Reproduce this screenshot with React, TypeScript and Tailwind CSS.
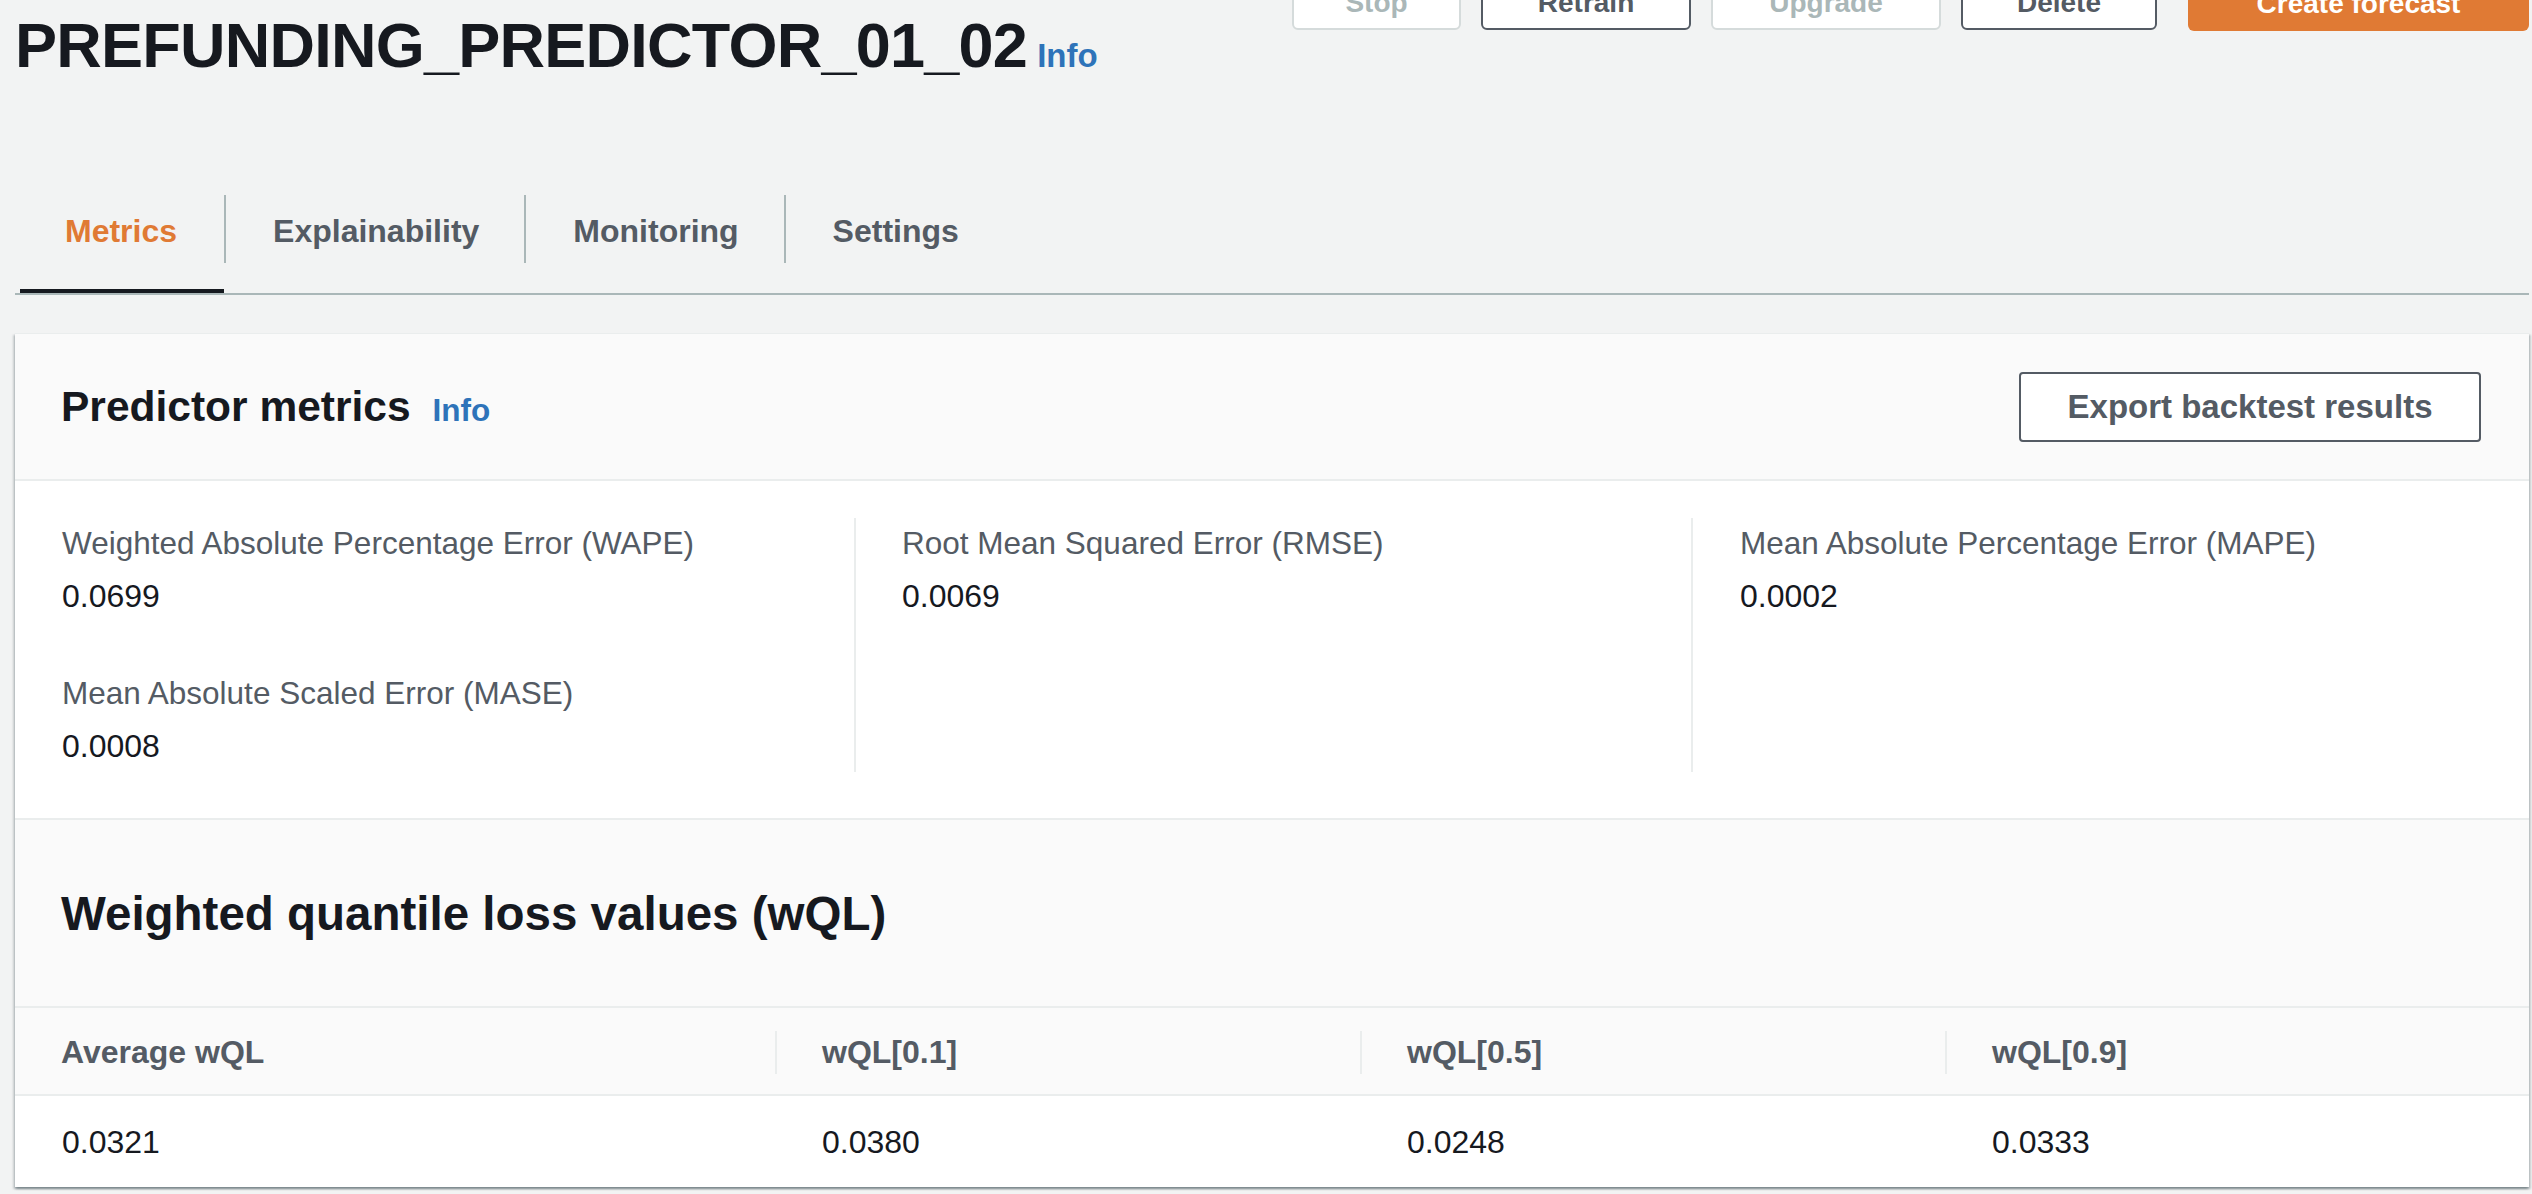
type Metric = {
  label: string;
  value: string;
};

type Tab = {
  name: string;
  active?: boolean;
};

const tabs: Tab[] = [
  { name: "Metrics", active: true },
  { name: "Explainability" },
  { name: "Monitoring" },
  { name: "Settings" },
];

const metricColumns: Metric[][] = [
  [
    { label: "Weighted Absolute Percentage Error (WAPE)", value: "0.0699" },
    { label: "Mean Absolute Scaled Error (MASE)", value: "0.0008" },
  ],
  [{ label: "Root Mean Squared Error (RMSE)", value: "0.0069" }],
  [{ label: "Mean Absolute Percentage Error (MAPE)", value: "0.0002" }],
];

const wqlColumns = [
  { head: "Average wQL", value: "0.0321" },
  { head: "wQL[0.1]", value: "0.0380" },
  { head: "wQL[0.5]", value: "0.0248" },
  { head: "wQL[0.9]", value: "0.0333" },
];

function HeaderActions() {
  return (
    <div className="mt-[-34px] flex items-start gap-[20px]">
      <button
        type="button"
        className="h-[64px] w-[169px] rounded-[6px] border-2 border-[#d5dbdb] bg-white pt-[10px] text-[28px] font-bold text-[#aab7b8]"
      >
        Stop
      </button>
      <button
        type="button"
        className="h-[64px] w-[210px] rounded-[6px] border-2 border-[#545b64] bg-white pt-[10px] text-[28px] font-bold text-[#545b64]"
      >
        Retrain
      </button>
      <button
        type="button"
        className="h-[64px] w-[230px] rounded-[6px] border-2 border-[#d5dbdb] bg-white pt-[10px] text-[28px] font-bold text-[#aab7b8]"
      >
        Upgrade
      </button>
      <button
        type="button"
        className="h-[64px] w-[196px] rounded-[6px] border-2 border-[#545b64] bg-white pt-[10px] text-[28px] font-bold text-[#545b64]"
      >
        Delete
      </button>
      <button
        type="button"
        className="ml-[11px] h-[65px] w-[341px] rounded-[6px] bg-[#e07a34] pt-[10px] text-[28px] font-bold text-white"
      >
        Create forecast
      </button>
    </div>
  );
}

function Tabs() {
  return (
    <div className="mt-[98px] border-b-2 border-[#aab7b8]">
      <div className="ml-[5px] flex">
        {tabs.map((tab, i) => (
          <div key={tab.name} className="flex flex-col pt-[14px]">
            <div
              className={
                i === 0
                  ? "flex h-[68px] items-center pl-[45px] pr-[47px] pt-[3px]"
                  : "flex h-[68px] items-center border-l-2 border-[#aab7b8] pl-[47px] pr-[45px] pt-[3px]"
              }
            >
              <span
                className={
                  tab.active
                    ? "text-[32px] font-bold leading-[36px] text-[#e07a34]"
                    : "text-[32px] font-bold leading-[36px] text-[#545b64]"
                }
              >
                {tab.name}
              </span>
            </div>
            <div className="h-[26px]" />
            <div className={tab.active ? "h-[4px] bg-[#16191f]" : "h-[4px]"} />
          </div>
        ))}
      </div>
    </div>
  );
}

function MetricItem({ metric, first }: { metric: Metric; first: boolean }) {
  return (
    <div className={first ? "" : "mt-[53px]"}>
      <p className="text-[31.5px] leading-[44px] text-[#545b64]">{metric.label}</p>
      <p className="mt-[9px] text-[32px] leading-[44px] text-[#16191f]">{metric.value}</p>
    </div>
  );
}

function PredictorCard() {
  return (
    <section className="mt-[38px] border-t border-[#eaeded] bg-white shadow-[0_2px_2px_0_rgba(0,28,36,0.3),2px_2px_2px_0_rgba(0,28,36,0.15),-2px_2px_2px_0_rgba(0,28,36,0.15)]">
      <div className="flex h-[147px] items-center justify-between border-b-2 border-[#eaeded] bg-[#fafafa] pl-[46px] pr-[48px]">
        <div className="flex items-baseline gap-[22px]">
          <h2 className="text-[42.5px] font-bold text-[#16191f]">Predictor metrics</h2>
          <a className="text-[31.5px] font-bold text-[#2e73b9]">Info</a>
        </div>
        <button
          type="button"
          className="h-[70px] w-[462px] rounded-[4px] border-2 border-[#545b64] bg-white text-[33px] font-bold text-[#545b64]"
        >
          Export backtest results
        </button>
      </div>

      <div className="grid grid-cols-[839px_837px_1fr] border-b-2 border-[#eaeded] pb-[46px] pt-[37px]">
        {metricColumns.map((col, i) => (
          <div
            key={i}
            className={
              i === 0
                ? "pb-[4px] pl-[47px] pt-[3px]"
                : i === 1
                  ? "border-l-2 border-[#eaeded] pb-[4px] pl-[46px] pt-[3px]"
                  : "border-l-2 border-[#eaeded] pb-[4px] pl-[47px] pt-[3px]"
            }
          >
            {col.map((m, j) => (
              <MetricItem key={m.label} metric={m} first={j === 0} />
            ))}
          </div>
        ))}
      </div>

      <div className="flex h-[188px] items-center border-b-2 border-[#eaeded] bg-[#fafafa] pl-[46px] pt-[2px]">
        <h2 className="text-[47.5px] font-bold text-[#16191f]">Weighted quantile loss values (wQL)</h2>
      </div>

      <div className="grid h-[88px] grid-cols-[760px_585px_585px_1fr] border-b-2 border-[#eaeded] bg-[#fafafa] pt-[2px]">
        {wqlColumns.map((c, i) => (
          <div key={c.head} className="flex items-center">
            <div
              className={
                i === 0
                  ? "flex h-[43px] items-center pl-[46px]"
                  : "flex h-[43px] items-center border-l-2 border-[#eaeded] pl-[45px]"
              }
            >
              <span className="text-[32px] font-bold text-[#545b64]">{c.head}</span>
            </div>
          </div>
        ))}
      </div>

      <div className="grid h-[91px] grid-cols-[760px_585px_585px_1fr]">
        {wqlColumns.map((c) => (
          <div key={c.head} className="flex items-center pl-[47px]">
            <span className="text-[32px] text-[#16191f]">{c.value}</span>
          </div>
        ))}
      </div>
    </section>
  );
}

export default function App() {
  return (
    <div className="min-h-[1194px] overflow-hidden bg-[#f2f3f3] pb-[20px] pl-[15px] pr-[3px] font-['Liberation_Sans',Arial,sans-serif]">
      <div className="flex items-start justify-between">
        <div className="flex items-baseline gap-[10px] pt-[7px]">
          <h1 className="text-[63px] font-bold leading-[76px] tracking-[-0.75px] text-[#16191f]">
            PREFUNDING_PREDICTOR_01_02
          </h1>
          <a className="text-[33px] font-bold text-[#2e73b9]">Info</a>
        </div>
        <HeaderActions />
      </div>
      <Tabs />
      <PredictorCard />
    </div>
  );
}
